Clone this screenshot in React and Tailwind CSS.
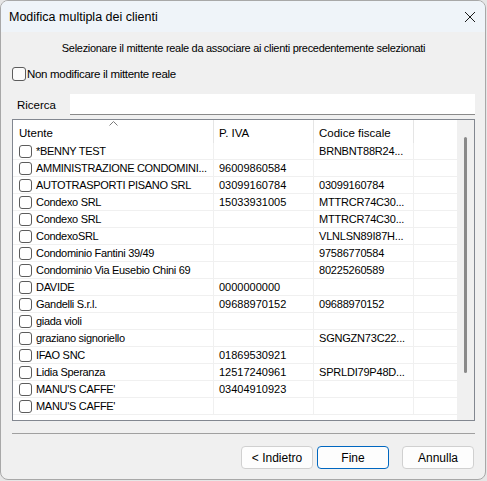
import React from "react";

const rows = [
  ["*BENNY TEST", "", "BRNBNT88R24..."],
  ["AMMINISTRAZIONE CONDOMINI...", "96009860584", ""],
  ["AUTOTRASPORTI PISANO SRL", "03099160784", "03099160784"],
  ["Condexo SRL", "15033931005", "MTTRCR74C30..."],
  ["Condexo SRL", "", "MTTRCR74C30..."],
  ["CondexoSRL", "", "VLNLSN89I87H..."],
  ["Condominio Fantini 39/49", "", "97586770584"],
  ["Condominio Via Eusebio Chini 69", "", "80225260589"],
  ["DAVIDE", "0000000000", ""],
  ["Gandelli S.r.l.", "09688970152", "09688970152"],
  ["giada violi", "", ""],
  ["graziano signoriello", "", "SGNGZN73C22..."],
  ["IFAO SNC", "01869530921", ""],
  ["Lidia Speranza", "12517240961", "SPRLDI79P48D..."],
  ["MANU'S CAFFE'", "03404910923", ""],
  ["MANU'S CAFFE'", "", ""],
];

const Box = () => (
  <span className="w-[13px] h-[13px] shrink-0 rounded-[3px] border border-[#5c5c5c] bg-white" />
);

const Button = ({ children, primary }) => (
  <button
    className={
      "h-[23px] w-[72px] rounded-[4px] bg-[#fdfdfd] text-[12px] text-black " +
      (primary ? "border border-[#0067c0]" : "border border-[#d0d0d0]")
    }
  >
    {children}
  </button>
);

export default function App() {
  return (
    <div
      className="w-[487px] h-[481px] bg-[#e6e6e6] text-black text-[11.5px] leading-[16px]"
      style={{ fontFamily: '"Liberation Sans", Arial, sans-serif' }}
    >
      <div className="w-[486px] h-[480px] flex flex-col rounded-lg border border-[#a8a8a8] overflow-hidden bg-[#f0f0f0]">
        {/* title bar */}
        <div className="h-[31px] shrink-0 flex items-center justify-between bg-[#eff4f9] pl-[8px] pr-[8px]">
          <span className="text-[12.5px]">Modifica multipla dei clienti</span>
          <svg width="12" height="12" viewBox="0 0 12 12" className="mr-[1px]">
            <path d="M1 1L11 11M11 1L1 11" stroke="#1a1a1a" strokeWidth="1" />
          </svg>
        </div>

        <div className="flex-1 flex flex-col pl-[11px] pr-[10px]">
          <p className="mt-[8px] text-center text-[11px] tracking-[-0.3px]">
            Selezionare il mittente reale da associare ai clienti precedentemente selezionati
          </p>

          <label className="mt-[10px] flex items-center gap-[1px]">
            <span className="w-[14px] h-[14px] rounded-[3px] border border-[#5c5c5c] bg-[#fbfbfb]" />
            <span className="tracking-[-0.3px]">Non modificare il mittente reale</span>
          </label>

          <div className="mt-[12px] flex items-center">
            <span className="w-[58px] pl-[5px]">Ricerca</span>
            <div className="flex-1 h-[21px] bg-white border-b border-[#8a8a8a]" />
          </div>

          <div className="mt-[4px] h-[302px] border border-[#828790] bg-white flex text-[11px]">
            <div className="flex-1 flex flex-col">
              <div className="h-[23px] shrink-0 flex relative text-[11.5px]">
                <svg width="9" height="5" viewBox="0 0 9 5" className="absolute left-[96px] top-[1px]">
                  <path d="M0.5 4.5L4.5 0.5L8.5 4.5" stroke="#7a7a7a" fill="none" />
                </svg>
                <div className="w-[201px] border-r border-[#e5e5e5] pl-[6px] pt-[2px] flex items-center">Utente</div>
                <div className="w-[100px] border-r border-[#e5e5e5] pl-[5px] pt-[2px] flex items-center">P. IVA</div>
                <div className="w-[100px] border-r border-[#e5e5e5] pl-[5px] pt-[2px] flex items-center">Codice fiscale</div>
                <div className="flex-1" />
              </div>
              {rows.map((r, i) => (
                <div key={i} className="h-[17px] shrink-0 flex border-b border-[#f0f0f0]">
                  <div className="w-[201px] border-r border-[#f0f0f0] pl-[6px] flex items-center gap-[4px] whitespace-nowrap overflow-hidden">
                    <Box />
                    <span className="tracking-[-0.3px]">{r[0]}</span>
                  </div>
                  <div className="w-[100px] border-r border-[#f0f0f0] pl-[5px] flex items-center">{r[1]}</div>
                  <div className="w-[100px] border-r border-[#f0f0f0] pl-[5px] flex items-center tracking-[-0.2px]">{r[2]}</div>
                  <div className="flex-1" />
                </div>
              ))}
            </div>
            <div className="w-[17px] shrink-0 bg-[#f0f0f0] flex justify-center pt-[17px]">
              <div className="w-[3px] h-[236px] bg-[#8a8a8a] rounded-full" />
            </div>
          </div>

          <div className="mt-[12px] h-px bg-[#a0a0a0]" />

          <div className="mt-[12px] flex justify-end pr-[1px]">
            <Button>&lt; Indietro</Button>
            <span className="w-[4px]" />
            <Button primary>Fine</Button>
            <span className="w-[13px]" />
            <Button>Annulla</Button>
          </div>
        </div>
      </div>
    </div>
  );
}
